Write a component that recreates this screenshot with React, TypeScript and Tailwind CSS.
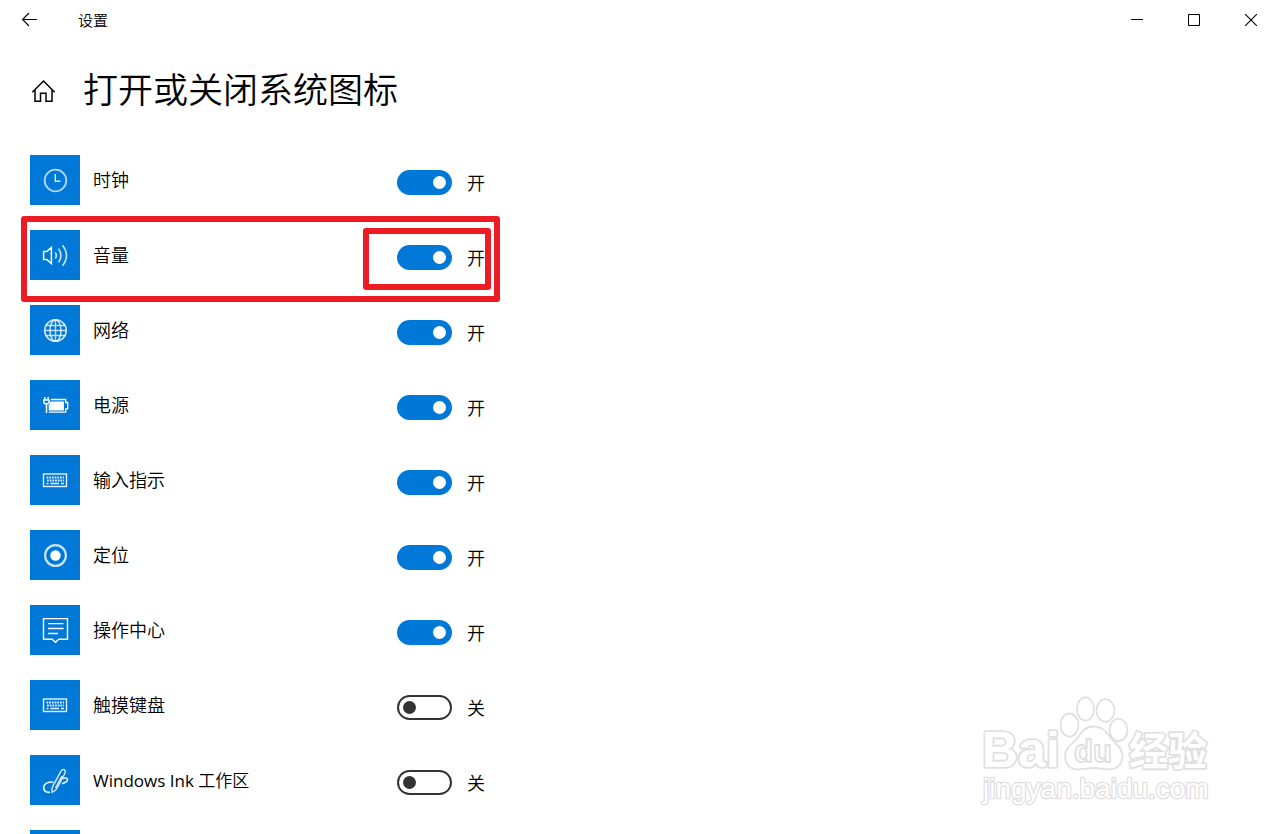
import { useState, type ReactNode } from "react";

type Item = { id: string; label: ReactNode; icon: ReactNode; on: boolean; highlighted?: boolean };

const keyboardIcon = (
  <>
    <rect x="13.5" y="19" width="23" height="12.5" strokeWidth="1.4" opacity="0.9" />
    <path d="M16.5 22.5H34M17 25.5H34" strokeWidth="1.9" strokeDasharray="1.8 0.9" opacity="0.85" />
    <path d="M16.5 28.5h2M20.5 28.5h8.5M31 28.5h3" strokeWidth="1.7" opacity="0.9" />
  </>
);

const items: Item[] = [
  {
    id: "clock",
    label: "时钟",
    on: true,
    icon: (
      <>
        <circle cx="25.5" cy="25.5" r="10.8" opacity="0.7" strokeWidth="1.8" />
        <path d="M25.3 19v7.3h5.2" opacity="0.85" />
      </>
    ),
  },
  {
    id: "volume",
    label: "音量",
    on: true,
    highlighted: true,
    icon: (
      <>
        <path d="M13.6 21.6h3.2l4.6-4.2v16.2l-4.6-4.2h-3.2z" strokeWidth="1.5" />
        <path d="M25.3 22.3q2 3.2 0 6.4M28.6 18.6q4.6 6.9 0 13.8M32.5 15.2q8 10.3 0 20.6" opacity="0.8" strokeWidth="1.6" />
      </>
    ),
  },
  {
    id: "network",
    label: "网络",
    on: true,
    icon: (
      <>
        <circle cx="25.5" cy="25.5" r="10.8" opacity="0.8" strokeWidth="1.5" />
        <ellipse cx="25.5" cy="25.5" rx="5.5" ry="10.8" opacity="0.8" />
        <path d="M25.5 14.5v22M14.5 25.5h22M16 20.5h19M16 30.5h19" opacity="0.75" strokeWidth="1.4" />
      </>
    ),
  },
  {
    id: "power",
    label: "电源",
    on: true,
    icon: (
      <>
        <path d="M14.8 17v3M18.2 17v3M13.8 20h5.4v1.8q0 2-2.7 2t-2.7-2zM16.5 24v9" strokeWidth="1.5" />
        <path d="M21 19.5h14.7v3h2v6.3h-2v3.4H18.8" strokeWidth="1.3" />
        <path d="M20.3 21.5h13.6v9H18.7v-5.8q1.6-.6 1.6-2.8z" fill="currentColor" stroke="none" />
      </>
    ),
  },
  { id: "input", label: "输入指示", on: true, icon: keyboardIcon },
  {
    id: "location",
    label: "定位",
    on: true,
    icon: (
      <>
        <circle cx="25.5" cy="25.5" r="10.4" opacity="0.8" strokeWidth="2.2" />
        <circle cx="25.5" cy="25.5" r="5.2" fill="currentColor" stroke="none" />
      </>
    ),
  },
  {
    id: "action-center",
    label: "操作中心",
    on: true,
    icon: (
      <path d="M13.5 13.6h24v20.6h-8.7l-3.3 3-3.3-3h-8.7zM18 18.6h15.5M18 23.5h15.5M18 28.5h10" />
    ),
  },
  { id: "touch-keyboard", label: "触摸键盘", on: false, icon: keyboardIcon },
  {
    id: "ink",
    label: (
      <>
        <span className="text-[17px] font-normal">Windows Ink </span>
        <span className="text-[17px]">工作区</span>
      </>
    ),
    on: false,
    icon: (
      <>
        <path d="M22 37.4q-.6-3.4 1-6.6l7.3-13.5q2-3.7 4-2.7t.1 4.7L27.2 33q-2 3.4-5.2 4.4zM25.500 33l6.500-12" strokeWidth="1.4" opacity="0.85" />
        <path d="M32.5 23.5q4.8-1.4 5 1t-5.5 4.3M23.5 27q-9.3-.1-9.8 5.2-.1 5 5.3 5.2h1" strokeWidth="1.6" opacity="0.9" />
      </>
    ),
  },
];

function Tile({ children }: { children?: ReactNode }) {
  return (
    <span className="block size-[50px] shrink-0 bg-[#0078d7] text-white">
      <svg viewBox="0 0 50 50" className="size-full" fill="none" stroke="currentColor" strokeWidth="1.4" aria-hidden="true">
        {children}
      </svg>
    </span>
  );
}

function Row({ item }: { item: Item }) {
  const [on, setOn] = useState(item.on);
  return (
    <li className="relative flex h-[50px] items-center">
      <Tile>{item.icon}</Tile>
      <label htmlFor={item.id} className="ml-[13px] w-[304px] text-[18px] leading-6">
        {item.label}
      </label>
      <span className="flex items-center gap-[15px] pt-1">
        <input
          id={item.id}
          type="checkbox"
          role="switch"
          checked={on}
          onChange={(e) => setOn(e.target.checked)}
          className="flex h-[25px] w-[55px] appearance-none items-center rounded-full border-2 border-[#333] px-1 before:size-[13px] before:rounded-full before:bg-[#333] before:content-[''] checked:justify-end checked:border-[#0078d7] checked:bg-[#0078d7] checked:before:bg-white"
        />
        <span className="pt-0.5 text-[18px] leading-6">{on ? "开" : "关"}</span>
      </span>
      {item.highlighted && (
        <>
          <span className="pointer-events-none absolute -top-[14px] -left-[9px] h-[86px] w-[479px] rounded-[3px] border-6 border-[#ed1c24]" />
          <span className="pointer-events-none absolute -top-[2px] left-[333px] h-[62px] w-[128px] rounded-[3px] border-6 border-[#ed1c24]" />
        </>
      )}
    </li>
  );
}

function Watermark() {
  return (
    <svg
      viewBox="0 0 250 120"
      className="pointer-events-none absolute right-[60px] bottom-6 w-[250px] font-['Liberation_Sans','Noto_Sans_CJK_SC',sans-serif] font-normal"
      fill="#fff"
      stroke="#e0e0e0"
      strokeWidth="1.8"
      strokeLinejoin="round"
    >
      <text x="12" y="77" fontSize="50" fontWeight="700" strokeWidth="3.6" paintOrder="stroke">Bai</text>
      <ellipse cx="115.5" cy="19" rx="8.5" ry="11.7" />
      <ellipse cx="135.5" cy="20.5" rx="9" ry="11.3" />
      <ellipse cx="99.5" cy="35" rx="9" ry="11.5" />
      <ellipse cx="148.5" cy="40" rx="9" ry="11.2" />
      <path d="M123.5 36.5c-9 0-12 6-16 11.5s-12.5 9-12.5 18c0 9 6 13.5 13 13.5 6 0 10-1.5 15.5-1.5s10 1.5 16 1.5c7 0 13-5 13-13.5 0-8-7-12-11.5-18s-8.5-11.5-17.5-11.5z" />
      <text x="104" y="72" fontSize="31" fontWeight="700">du</text>
      <text x="159" y="75" fontSize="39" fontWeight="700" strokeWidth="3.6" paintOrder="stroke">经验</text>
      <text x="13" y="108" fontSize="28" strokeWidth="2.6" paintOrder="stroke">jingyan.baidu.com</text>
    </svg>
  );
}

export default function App() {
  return (
    <div className="relative h-screen overflow-hidden bg-white font-['Open_Sans','Noto_Sans_CJK_SC_DemiLight','Noto_Sans_CJK_SC',sans-serif] font-[350] text-black">
      <header className="flex h-10 items-center justify-between">
        <div className="flex items-center gap-10 pl-[22px]">
          <button aria-label="返回" className="flex h-10 w-4 items-center">
            <svg viewBox="0 0 16 16" className="size-4" fill="none" stroke="currentColor" strokeWidth="1.1">
              <path d="M15 7.5H.8M7 1L.6 7.5 7 14" />
            </svg>
          </button>
          <span className="text-[15px] leading-5">设置</span>
        </div>
        <div className="flex pr-px">
          <button aria-label="最小化" className="flex h-10 w-[57px] items-center justify-center">
            <svg viewBox="0 0 12 12" className="size-3" stroke="currentColor">
              <path d="M0 5.5h12" />
            </svg>
          </button>
          <button aria-label="最大化" className="flex h-10 w-[57px] items-center justify-center">
            <svg viewBox="0 0 12 12" className="size-3" fill="none" stroke="currentColor">
              <path d="M.5.5h11v11H.5z" />
            </svg>
          </button>
          <button aria-label="关闭" className="flex h-10 w-[57px] items-center justify-center">
            <svg viewBox="0 0 12 12" className="size-3" stroke="currentColor" strokeWidth="1.1">
              <path d="M0 0l12 12M12 0L0 12" />
            </svg>
          </button>
        </div>
      </header>

      <main className="pl-[30px]">
        <div className="flex h-[100px] items-center gap-[27px]">
          <a href="#home" aria-label="主页">
            <svg viewBox="0 0 26 26" className="size-[26px]" fill="none" stroke="currentColor" strokeWidth="1.5">
              <path d="M2.3 15.2L13.5 4 24.7 15.2M5 13v11.3h5.5v-8h5.5v8h6V13" />
            </svg>
          </a>
          <h1 className="text-[35px] leading-[48px]">打开或关闭系统图标</h1>
        </div>
        <ul className="flex flex-col gap-[25px] pt-[15px]">
          {items.map((item) => (
            <Row key={item.id} item={item} />
          ))}
          <li aria-hidden="true">
            <Tile />
          </li>
        </ul>
      </main>
      <Watermark />
    </div>
  );
}
